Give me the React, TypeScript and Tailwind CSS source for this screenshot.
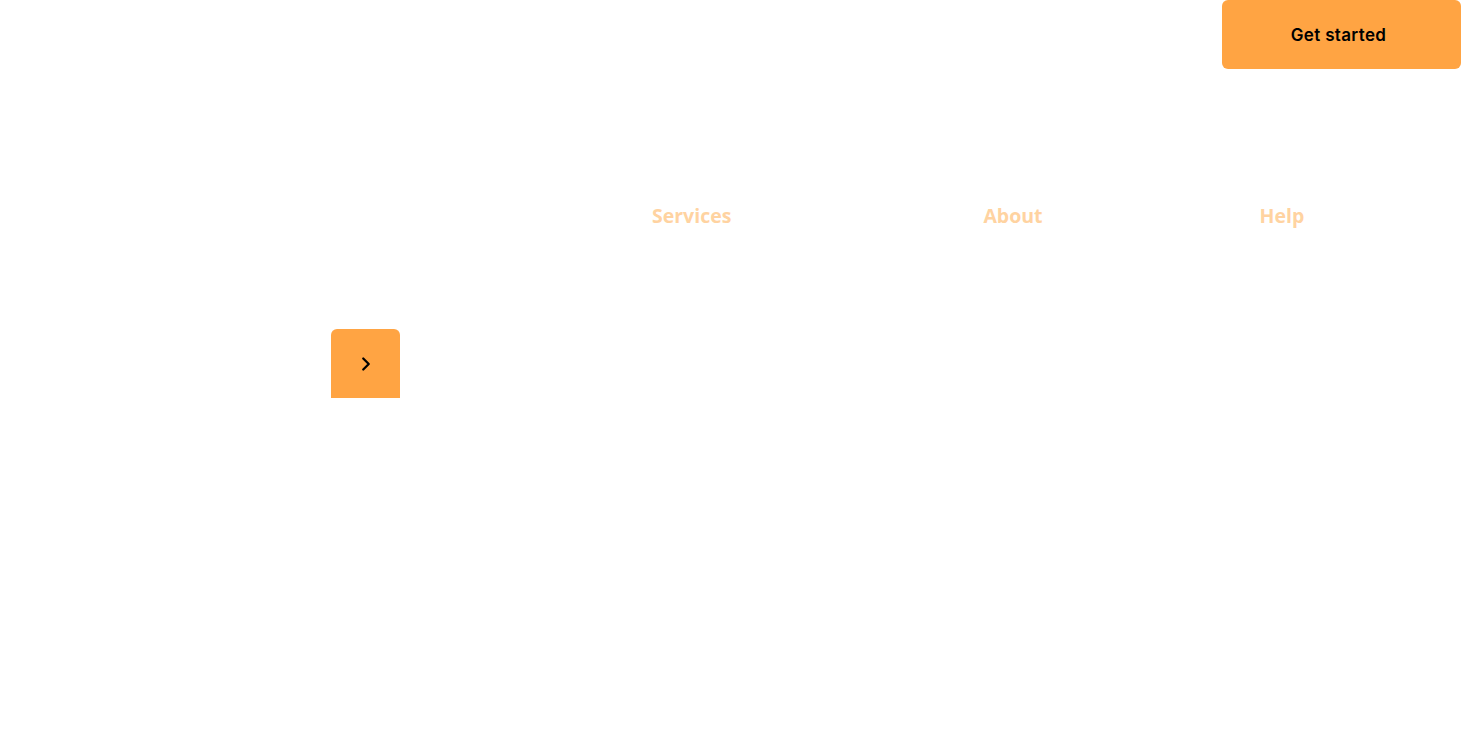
import React from 'react';
import { ChevronRight } from 'lucide-react';

export default function App() {
  return (
    <div className="min-h-[748px] w-full bg-white">
      {/* Header */}
      <div className="flex justify-end">
        <button className="w-[239px] h-[69px] bg-[#ffa443] rounded-md flex items-center justify-center pr-[6px] pt-[2px] text-[17px] font-semibold text-black font-['Inter',sans-serif] tracking-[0.02em]">
          Get started
        </button>
      </div>

      {/* Nav */}
      <nav className="mt-[133px] flex items-center font-['Open_Sans',sans-serif] font-bold text-[19.5px] leading-[28px] text-[#ffd3a1]">
        <a className="ml-[652px]">Services</a>
        <a className="ml-[252px]">About</a>
        <a className="ml-[217px]">Help</a>
      </nav>

      {/* Slider control */}
      <div className="mt-[99px] ml-[331px]">
        <button className="w-[69px] h-[69px] bg-[#ffa443] rounded-t-md flex items-center justify-center text-black">
          <ChevronRight className="w-[22px] h-[22px]" strokeWidth={2.5} />
        </button>
      </div>
    </div>
  );
}
